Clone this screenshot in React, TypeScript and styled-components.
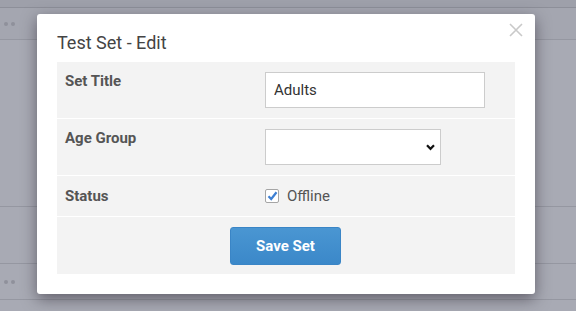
import React from "react";
import styled, { createGlobalStyle } from "styled-components";

const Global = createGlobalStyle`
  html, body { margin: 0; padding: 0; }
  body { font-family: Roboto, "Liberation Sans", Arial, sans-serif; width: 576px; height: 311px; overflow: hidden; }
  * { box-sizing: border-box; }
`;

const Page = styled.div`
  position: relative;
  width: 576px;
  height: 311px;
  background: #a8aab4;
  display: flex;
  flex-direction: column;
  overflow: hidden;
`;

const TopBand = styled.div`
  height: 8px;
  background: #9ea0aa;
  border-bottom: 1px solid #8d8f99;
`;

const ListRow = styled.div<{ $h: number; $tone?: string }>`
  height: ${(p) => p.$h}px;
  background: ${(p) => p.$tone || "transparent"};
  border-bottom: 1px solid #9597a1;
  display: flex;
  align-items: center;
  padding-left: 4px;
  gap: 3px;
`;

const Dot = styled.span`
  width: 4px;
  height: 4px;
  border-radius: 50%;
  background: #8f919b;
`;

const Modal = styled.div`
  position: absolute;
  left: 37px;
  top: 14px;
  width: 498px;
  height: 280px;
  background: #fff;
  border-radius: 3px;
  box-shadow: 0 5px 15px rgba(40, 35, 45, 0.55);
  padding: 15px 20px 20px;
  display: flex;
  flex-direction: column;
`;

const Title = styled.h4`
  margin: 0 0 5px;
  font-size: 18px;
  line-height: 28px;
  font-weight: 400;
  color: #444;
`;

const Close = styled.button`
  position: absolute;
  top: 9px;
  right: 12px;
  width: 14px;
  height: 14px;
  padding: 0;
  border: 0;
  background: transparent;
  display: flex;
`;

const Table = styled.div`
  background: #f3f3f3;
  display: flex;
  flex-direction: column;
`;

const Row = styled.div<{ $center?: boolean }>`
  display: flex;
  align-items: ${(p) => (p.$center ? "center" : "flex-start")};
  padding: 10px 8px;
  & + & { border-top: 1px solid #fff; }
`;

const Label = styled.div`
  width: 200px;
  font-size: 15px;
  line-height: 19px;
  font-weight: 700;
  color: #555;
`;

const TextInput = styled.input`
  width: 220px;
  height: 36px;
  border: 1px solid #ccc;
  background: #fff;
  padding: 0 8px;
  font-family: inherit;
  font-size: 15px;
  color: #333;
  outline: none;
`;

const SelectWrap = styled.div`
  position: relative;
  width: 176px;
  height: 36px;
`;

const Select = styled.select`
  appearance: none;
  width: 100%;
  height: 100%;
  border: 1px solid #ccc;
  background: #fff;
  font-family: inherit;
  font-size: 14px;
`;

const Chevron = styled.svg`
  position: absolute;
  right: 6px;
  top: 15px;
  pointer-events: none;
`;

const CheckLabel = styled.label`
  display: flex;
  align-items: center;
  gap: 8px;
  font-size: 15px;
  line-height: 20px;
  color: #555;
`;

const Box = styled.span`
  width: 14px;
  height: 14px;
  border: 1px solid #a5a5a5;
  border-radius: 2px;
  background: #fff;
  display: flex;
  align-items: center;
  justify-content: center;
`;

const Footer = styled.div`
  display: flex;
  justify-content: center;
  padding: 10px 9px 9px 8px;
  border-top: 1px solid #fff;
`;

const Button = styled.button`
  width: 111px;
  height: 38px;
  border: 1px solid #3a85c6;
  border-radius: 3px;
  background: linear-gradient(#4a96d2, #3b88c9);
  color: #fff;
  font-family: inherit;
  font-size: 15px;
  font-weight: 700;
`;

export default function App() {
  return (
    <>
      <Global />
      <Page>
        <TopBand />
        <ListRow $h={32} $tone="#a4a6b0">
          <Dot />
          <Dot />
        </ListRow>
        <ListRow $h={167} />
        <ListRow $h={57} />
        <ListRow $h={36}>
          <Dot />
          <Dot />
        </ListRow>
        <Modal>
          <Close aria-label="Close">
            <svg width="14" height="14" viewBox="0 0 14 14">
              <path d="M1 1 L13 13 M13 1 L1 13" stroke="#c9c9c9" strokeWidth="1.6" />
            </svg>
          </Close>
          <Title>Test Set - Edit</Title>
          <Table>
            <Row>
              <Label>Set Title</Label>
              <TextInput defaultValue="Adults" />
            </Row>
            <Row>
              <Label>Age Group</Label>
              <SelectWrap>
                <Select defaultValue="">
                  <option value=""></option>
                </Select>
                <Chevron width="9" height="7" viewBox="0 0 9 7">
                  <path d="M1 1.2 L4.5 4.8 L8 1.2" stroke="#111" strokeWidth="2.2" fill="none" />
                </Chevron>
              </SelectWrap>
            </Row>
            <Row $center>
              <Label>Status</Label>
              <CheckLabel>
                <Box>
                  <svg width="11" height="10" viewBox="0 0 11 10">
                    <path d="M1.5 5.2 L4.2 8 L9.5 1.2" stroke="#3d7fd3" strokeWidth="2.2" fill="none" />
                  </svg>
                </Box>
                Offline
              </CheckLabel>
            </Row>
            <Footer>
              <Button>Save Set</Button>
            </Footer>
          </Table>
        </Modal>
      </Page>
    </>
  );
}
